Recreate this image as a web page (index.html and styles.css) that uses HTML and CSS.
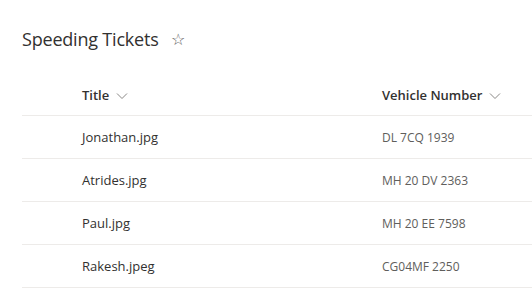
FILE: index.html
```html
<!DOCTYPE html>
<html lang="en">
<head>
  <meta charset="UTF-8">
  <title>Speeding Tickets</title>
  <link rel="stylesheet" href="styles.css">
</head>
<body>
  <div class="list">
    <div class="list-title">
      <h2>Speeding Tickets</h2>
      <span class="fav">&#9734;</span>
    </div>

    <div class="grid">
      <div class="row head">
        <div class="cell c-title">Title <svg class="chev" width="12" height="8" viewBox="0 0 12 8"><path d="M1 1.5 L6 6.5 L11 1.5" fill="none" stroke="#8a8886" stroke-width="1"/></svg></div>
        <div class="cell c-num">Vehicle Number <svg class="chev" width="12" height="8" viewBox="0 0 12 8"><path d="M1 1.5 L6 6.5 L11 1.5" fill="none" stroke="#8a8886" stroke-width="1"/></svg></div>
      </div>
      <div class="row">
        <div class="cell c-title">Jonathan.jpg</div>
        <div class="cell c-num">DL 7CQ 1939</div>
      </div>
      <div class="row">
        <div class="cell c-title">Atrides.jpg</div>
        <div class="cell c-num">MH 20 DV 2363</div>
      </div>
      <div class="row">
        <div class="cell c-title">Paul.jpg</div>
        <div class="cell c-num">MH 20 EE 7598</div>
      </div>
      <div class="row">
        <div class="cell c-title">Rakesh.jpeg</div>
        <div class="cell c-num">CG04MF 2250</div>
      </div>
    </div>
  </div>
</body>
</html>
```

FILE: styles.css
```css
body {
  margin: 0;
  font-family: "Open Sans", "Noto Sans", sans-serif;
  background: white;
  color: #323130;
}
.list {
  padding: 0 0 0 22px;
}
.list-title {
  display: flex;
  align-items: center;
  height: 40px;
  margin-top: 19px;
}
.list-title h2 {
  margin: 0;
  font-size: 18px;
  font-weight: 400;
  letter-spacing: -0.2px;
}
.fav {
  margin-left: 12px;
  font-size: 16px;
  color: #605e5c;
}
.grid {
  margin-top: 15px;
}
.row {
  display: flex;
  height: 42px;
  border-bottom: 1px solid #edebe9;
  align-items: center;
}
.row.head {
  height: 41px;
  font-size: 13px;
  font-weight: 600;
}
.cell {
  font-size: 13px;
  color: #323130;
}
.c-title {
  width: 300px;
  padding-left: 60px;
}
.c-num {
  font-size: 12px;
  color: #605e5c;
}
.head .cell {
  font-size: 13px;
  color: #323130;
}
.chev {
  margin-left: 3px;
  vertical-align: middle;
}
```
